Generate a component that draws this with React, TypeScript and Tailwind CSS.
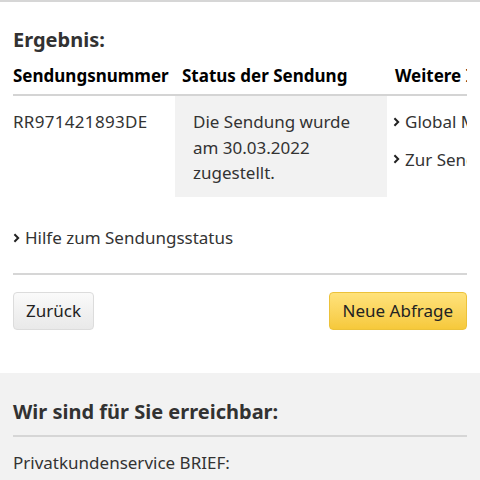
const Chevron = () => (
  <svg viewBox="0 0 8 12" className="w-[7px] h-[10px] mr-[5px] shrink-0" aria-hidden>
    <path d="M1.5 1.5 L6 6 L1.5 10.5" fill="none" stroke="#222" strokeWidth="2.4" />
  </svg>
);

const links = ["Global Mail Tracking", "Zur Sendungsverfolgung"];

export default function App() {
  return (
    <div className="w-[480px] h-[480px] overflow-hidden bg-white text-[#333] font-['Noto_Sans',sans-serif] border-t-2 border-[#d6d6d6]">
      <div className="px-[13px]">
        <h2 className="text-[20px] font-bold text-[#323232] pt-[23px] leading-[30px]">Ergebnis:</h2>

        {/* result table, wider than the screen */}
        <div className="mt-[8px] overflow-hidden">
          <div className="w-[600px]">
            <div className="flex text-[17px] font-bold text-black leading-[26px] pb-[5px] border-b-2 border-[#d4d4d4] w-[455px]">
              <div className="w-[162px] shrink-0">Sendungsnummer</div>
              <div className="w-[212px] shrink-0 pl-[7px]">Status der Sendung</div>
              <div className="pl-[8px] whitespace-nowrap">Weitere Informationen</div>
            </div>
            <div className="flex text-[17px] leading-[25.5px]">
              <div className="w-[162px] shrink-0 pt-[13px] tracking-[0.3px]">RR971421893DE</div>
              <div className="w-[212px] shrink-0 bg-[#f2f2f2] pl-[18px] pr-[19px] pt-[13px] pb-[11px]">
                Die Sendung wurde am 30.03.2022 zugestellt.
              </div>
              <div className="pl-[6px] pt-[13px] flex flex-col gap-[12px]">
                {links.map((l) => (
                  <div key={l} className="flex items-center whitespace-nowrap">
                    <Chevron />
                    {l}
                  </div>
                ))}
              </div>
            </div>
          </div>
        </div>

        <div className="flex items-center mt-[28px] text-[17px] leading-[26px]">
          <Chevron />
          Hilfe zum Sendungsstatus
        </div>

        <div className="mt-[22px] border-t-2 border-[#d6d6d6]" />

        <div className="flex justify-between mt-[17px]">
          <button className="h-[38px] px-[12px] rounded-[4px] border border-[#dcdcdc] bg-gradient-to-b from-[#fafafa] to-[#e9e9e9] text-[17px] text-[#222]">
            Zurück
          </button>
          <button className="h-[38px] px-[13px] rounded-[4px] border border-[#ecc23a] bg-gradient-to-b from-[#ffe27a] to-[#f6c93a] text-[17px] text-[#222]">
            Neue Abfrage
          </button>
        </div>
      </div>

      <div className="mt-[43px] bg-[#f2f2f2] px-[13px] pt-[24px] pb-[20px]">
        <h2 className="text-[20px] font-bold text-[#323232] leading-[30px] pb-[8px] border-b-2 border-[#d6d6d6]">
          Wir sind für Sie erreichbar:
        </h2>
        <p className="text-[17px] leading-[26px] mt-[13px]">Privatkundenservice BRIEF:</p>
      </div>
    </div>
  );
}
